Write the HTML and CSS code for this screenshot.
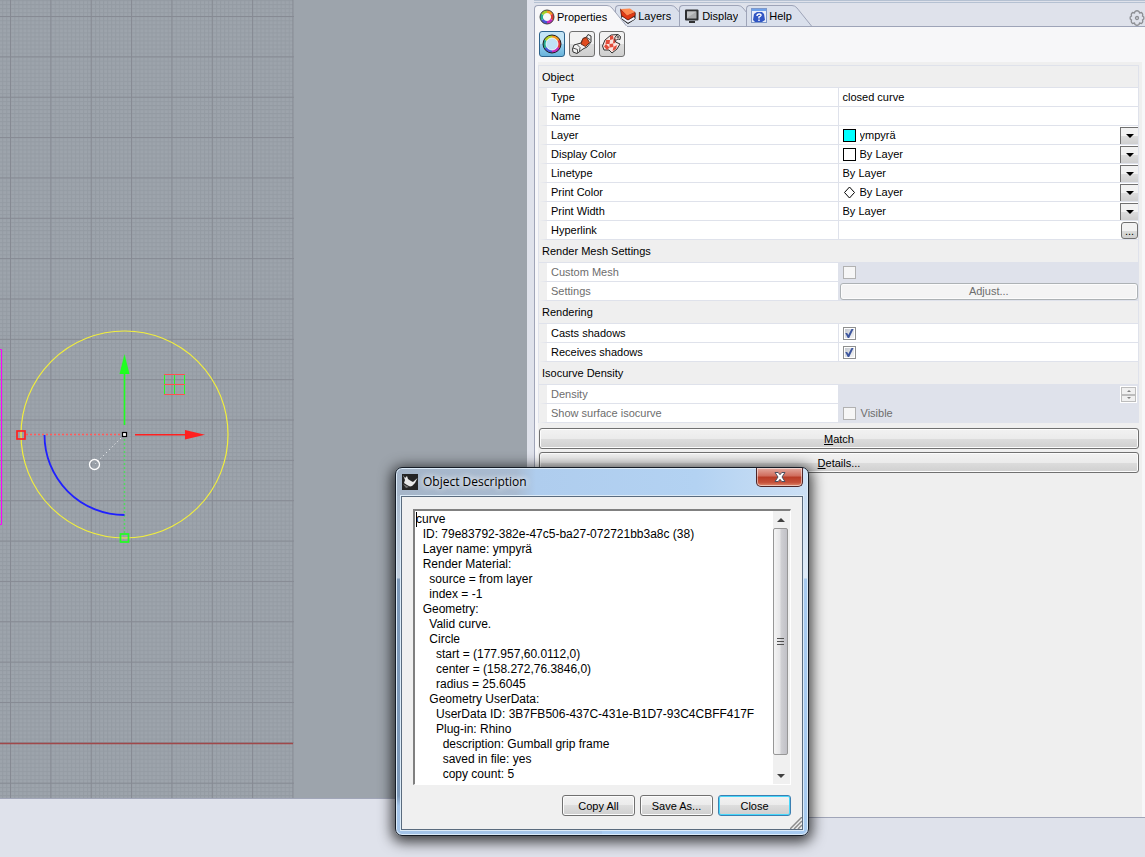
FILE: index.html
```
<!DOCTYPE html>
<html lang="en">
<head>
	<meta charset="UTF-8">
	<title>Properties</title>
	<link rel="stylesheet" href="styles.css">
</head>
<body>
<div class="app">
	<main class="viewport">
		<svg class="scene" aria-hidden="true">
			<defs>
				<pattern id="minor" x="2.25" y="0.15" width="4.035" height="4.035" patternUnits="userSpaceOnUse">
					<path d="M0 .5H4.035M.5 0V4.035" stroke="#949ba3" stroke-width="1" fill="none"/>
				</pattern>
				<pattern id="major" x="10" y="16" width="40.35" height="40.35" patternUnits="userSpaceOnUse">
					<path d="M0 .5H40.35M.5 0V40.35" stroke="#868a93" stroke-width="1" fill="none"/>
				</pattern>
			</defs>
			<rect width="293" height="100%" fill="url(#minor)"/>
			<rect width="294" height="100%" fill="url(#major)"/>
			<path d="M0 743.500H293" stroke="#a0484a" stroke-width="1.600"/>
			<path d="M0 349.500H1.500V524.500H0" stroke="#f0f" fill="none"/>
			<circle cx="124.500" cy="434.500" r="103.500" fill="none" stroke="#f2ef3c" stroke-width="1.200"/>
			<path d="M26 434.500H121" stroke="#ff5a5a" stroke-width="1.400" stroke-dasharray="2 2"/>
			<path d="M124.500 439V533" stroke="#52d860" stroke-width="1.400" stroke-dasharray="2 2"/>
			<path d="M121 438L95 464" stroke="#fff" stroke-dasharray="1 3"/>
			<path d="M44.500 435A80 80 0 0 0 124.500 515" fill="none" stroke="#2020ff" stroke-width="1.800"/>
			<circle cx="94.500" cy="464.500" r="5" fill="none" stroke="#fff" stroke-width="1.300"/>
			<path d="M124.500 425V372" stroke="#20ff20" stroke-width="1.600"/>
			<path d="M124.500 354L129.500 374H119.500Z" fill="#20ff20"/>
			<path d="M135 434.800H186" stroke="#ff2020" stroke-width="1.600"/>
			<path d="M205 434.800L185 430V439.500Z" fill="#ff2020"/>
			<rect x="17" y="431" width="8" height="8" fill="none" stroke="#ff2020" stroke-width="1.700"/>
			<rect x="120.500" y="534" width="8" height="8" fill="none" stroke="#20ff20" stroke-width="1.700"/>
			<rect x="122.500" y="432.500" width="4" height="4" fill="#fff" stroke="#000" stroke-width="1.200"/>
			<path d="M164.500 374.500V394.500M174.500 374.500V394.500M184.500 374.500V394.500" stroke="#20ff20"/>
			<path d="M164 374.500H185M164 384.500H185M164 394.500H185" stroke="#ff5050"/>
		</svg>
	</main>

	<aside class="dock">
		<div class="tabs" role="tablist">
			<button class="tab active" role="tab" aria-selected="true">
				<svg class="icon" viewBox="0 0 16 16"><g fill="none" stroke-width="3"><path d="M8 2.500A5.500 5.500 0 0 1 12.800 5.300" stroke="#f39a22"/><path d="M12.800 5.300A5.500 5.500 0 0 1 12.800 10.700" stroke="#df3b35"/><path d="M12.800 10.700A5.500 5.500 0 0 1 8 13.500" stroke="#c32cba"/><path d="M8 13.500A5.500 5.500 0 0 1 3.200 10.700" stroke="#4854d5"/><path d="M3.200 10.700A5.500 5.500 0 0 1 3.200 5.300" stroke="#28ad91"/><path d="M3.200 5.300A5.500 5.500 0 0 1 8 2.500" stroke="#a2cf28"/></g><circle cx="8" cy="8" r="7" fill="none" stroke="#444"/></svg>
				Properties
				<svg class="slant" viewBox="0 0 20 21"><path class="fill" d="M0 0Q3 0 5 3L20 21V22H0Z"/><path class="edge" d="M0 .5Q3 .5 5 3L19.500 21"/></svg>
			</button>
			<button class="tab" role="tab">
				<svg class="icon" viewBox="0 0 16 16"><path d="M1 2L7 8L15 5V11L8 15.500L2 11Z" fill="#30333a" stroke="#222"/><path d="M2 9.500L8 13.500L14.500 10" stroke="#f4f6ff" stroke-width="2" fill="none"/><path d="M.5 1L7 7L15 4V7.500L8 12L1.500 7.500Z" fill="#e03a14" stroke="#76200f" stroke-width=".7"/><path d="M1 1L10 .5L15 4L7 7.500Z" fill="#ff8a50"/></svg>
				Layers
				<svg class="slant" viewBox="0 0 20 21"><path class="fill" d="M0 0Q3 0 5 3L20 21H0Z"/><path class="edge" d="M0 .5Q3 .5 5 3L19.500 21"/></svg>
			</button>
			<button class="tab" role="tab">
				<svg class="icon" viewBox="0 0 16 16"><rect x="1" y="1.500" width="13.500" height="11" rx="1" fill="#2d2f31"/><rect x="3" y="3.500" width="9.500" height="7" fill="#a9abad"/><path d="M3 3.500H12.500L3 10Z" fill="#c1c3c5"/><path d="M5 14H11" stroke="#333" stroke-width="2"/></svg>
				Display
				<svg class="slant" viewBox="0 0 20 21"><path class="fill" d="M0 0Q3 0 5 3L20 21H0Z"/><path class="edge" d="M0 .5Q3 .5 5 3L19.500 21"/></svg>
			</button>
			<button class="tab" role="tab">
				<svg class="icon" viewBox="0 0 16 16"><rect x=".5" y=".5" width="15" height="14" fill="#e9eef9" stroke="#7f98c8"/><path d="M1 2H15" stroke="#6fa2ec" stroke-width="2"/><path d="M3 6L6 4H11L13 6L14 12L11 14H4L2 12Z" fill="#3156c4"/><path d="M6 8C6 5.500 10.500 5.500 10 7.500Q9.500 8.500 8 9V10.500M8 11.500V13" fill="none" stroke="#fff" stroke-width="1.400"/></svg>
				Help
				<svg class="slant" viewBox="0 0 20 21"><path class="fill" d="M0 0Q3 0 5 3L20 21H0Z"/><path class="edge" d="M0 .5Q3 .5 5 3L19.500 21"/></svg>
			</button>
			<button class="gear" aria-label="Options">
				<svg viewBox="0 0 16 16"><g fill="none" stroke="#8d8f94" stroke-width="1.300"><path d="M6 1.500Q8 0 10 1.500L10.500 3L12.500 2.500Q14.300 4 13.500 6L14.800 7V9L13.500 10Q14.300 12 12.500 13.500L10.500 13L10 14.500Q8 16 6 14.500L5.500 13L3.500 13.500Q1.700 12 2.500 10L1.200 9V7L2.500 6Q1.700 4 3.500 2.500L5.500 3Z"/><circle cx="8" cy="8" r="1.500"/></g></svg>
			</button>
		</div>

		<div class="toolbar">
			<button class="tool on" aria-label="Object">
				<svg viewBox="0 0 22 22"><g fill="none" stroke-width="4"><path d="M11 4A7 7 0 0 1 17.060 7.500" stroke="#f59a20"/><path d="M17.060 7.500A7 7 0 0 1 17.060 14.500" stroke="#e03838"/><path d="M17.060 14.500A7 7 0 0 1 11 18" stroke="#c22dbd"/><path d="M11 18A7 7 0 0 1 4.940 14.500" stroke="#4656d8"/><path d="M4.940 14.500A7 7 0 0 1 4.940 7.500" stroke="#26aa8e"/><path d="M4.940 7.500A7 7 0 0 1 11 4" stroke="#b1d126"/></g><circle cx="11" cy="11" r="9" fill="none" stroke="#222"/><circle cx="11" cy="11" r="6" fill="#c0e2f5" stroke="#fff" stroke-width=".8"/></svg>
			</button>
			<button class="tool" aria-label="Material">
				<svg viewBox="0 0 22 22"><path d="M1.500 16L3 12L10 10L12 5.500L15.500 4L17 1.500L20 3V9L16 14L12 16L6 20.500L2 19Z" fill="#f2f2f2" stroke="#333"/><path d="M12 5.500L15.500 4.500L18.500 9.500L14.500 13.500L10 11Z" fill="#e14c20" stroke="#6c2b18"/><path d="M2 15L6.500 16.500V20M6 11.500L9 14.500L8.500 18M16 4.500L19.500 7" fill="none" stroke="#555"/></svg>
			</button>
			<button class="tool" aria-label="Texture Mapping">
				<svg viewBox="0 0 22 22"><path d="M1.500 13L4 7L10 2L17 1.500Q21 3 19 6.500Q15 5 14.500 9L19 11L16 16L11 20L8 17L3 17Z" fill="#fae4df" stroke="#333"/><path d="M9 3L12 2.500L12.500 6L9 7ZM5 7L9 7L8.500 11L4.500 11ZM8.500 11L12 10.500L12.500 14L8.500 14.500ZM12.500 6L15 6L14 10L12 10.500ZM3 13.500L5 11L8.500 14.500L6 17ZM12.500 14L16 12L15 16L11.500 18Z" fill="#e24c3a"/><path d="M14.500 9Q12 4 17 1.500" stroke="#333" fill="none"/><path d="M16 3H18.500L18 5L15.500 5Z" fill="#777"/></svg>
			</button>
		</div>

		<div class="sheet">
			<table class="props">
				<tbody>
					<tr class="group"><th colspan="2">Object</th></tr>
					<tr><th>Type</th><td>closed curve</td></tr>
					<tr><th><label for="name">Name</label></th><td><input class="text" type="text" id="name"></td></tr>
					<tr><th><label for="layer">Layer</label></th><td><div class="combo"><i class="swatch cyan"></i><select id="layer"><option>ympyrä</option></select><span class="drop"></span></div></td></tr>
					<tr><th><label for="dcolor">Display Color</label></th><td><div class="combo"><i class="swatch"></i><select id="dcolor"><option>By Layer</option></select><span class="drop"></span></div></td></tr>
					<tr><th><label for="linetype">Linetype</label></th><td><div class="combo"><select id="linetype"><option>By Layer</option></select><span class="drop"></span></div></td></tr>
					<tr><th><label for="pcolor">Print Color</label></th><td><div class="combo"><svg class="diamond" viewBox="0 0 13 13"><path d="M6.500 1L11.500 6.500L6.500 12L1.500 6.500Z" fill="#fff" stroke="#000"/></svg><select id="pcolor"><option>By Layer</option></select><span class="drop"></span></div></td></tr>
					<tr><th><label for="pwidth">Print Width</label></th><td><div class="combo"><select id="pwidth"><option>By Layer</option></select><span class="drop"></span></div></td></tr>
					<tr><th><label for="link">Hyperlink</label></th><td><div class="combo"><input class="text" type="text" id="link"><button class="more">...</button></div></td></tr>
				</tbody>
				<tbody>
					<tr class="group"><th colspan="2">Render Mesh Settings</th></tr>
					<tr class="off"><th><label for="mesh">Custom Mesh</label></th><td><input class="check" type="checkbox" id="mesh" disabled></td></tr>
					<tr class="off"><th>Settings</th><td class="flush"><button class="btn adjust" disabled>Adjust...</button></td></tr>
				</tbody>
				<tbody>
					<tr class="group"><th colspan="2">Rendering</th></tr>
					<tr><th><label for="casts">Casts shadows</label></th><td><input class="check" type="checkbox" id="casts" checked></td></tr>
					<tr><th><label for="receives">Receives shadows</label></th><td><input class="check" type="checkbox" id="receives" checked></td></tr>
				</tbody>
				<tbody>
					<tr class="group"><th colspan="2">Isocurve Density</th></tr>
					<tr class="off"><th><label for="density">Density</label></th><td><div class="combo"><input class="text" type="text" id="density" disabled><span class="spin"><button class="up" aria-label="Increase" disabled></button><button class="down" aria-label="Decrease" disabled></button></span></div></td></tr>
					<tr class="off"><th>Show surface isocurve</th><td><div class="combo"><input class="check" type="checkbox" id="visible" disabled><label class="visible" for="visible">Visible</label></div></td></tr>
				</tbody>
			</table>
			<div class="actions">
				<button class="btn"><u>M</u>atch</button>
				<button class="btn"><u>D</u>etails...</button>
			</div>
		</div>
	</aside>
</div>

<section class="dialog" role="dialog" aria-labelledby="dlg-title">
	<header class="titlebar">
		<svg class="logo" viewBox="0 0 16 16"><rect width="16" height="16" fill="#242424"/><path d="M1 1L3 4L5 2L6 5L9 7L11 8L15.500 4L13 9L10 12L8 12.500L5 11L2 9L3 6Z" fill="#e8e8e8"/><path d="M1 10L7 13L4 14Z" fill="#777"/></svg>
		<h1 id="dlg-title">Object Description</h1>
		<button class="close" aria-label="Close window"><svg viewBox="0 0 12 10"><path d="M1 .5H4.200L6 2.700L7.800 .5H11L8 5L11 9.500H7.800L6 7.300L4.200 9.500H1L4 5Z" fill="#fff" stroke="#4b5060"/></svg></button>
	</header>
	<div class="client">
		<div class="editor">
			<textarea aria-label="Description" readonly>curve
  ID: 79e83792-382e-47c5-ba27-072721bb3a8c (38)
  Layer name: ympyrä
  Render Material:
    source = from layer
    index = -1
  Geometry:
    Valid curve.
    Circle
      start = (177.957,60.0112,0)
      center = (158.272,76.3846,0)
      radius = 25.6045
    Geometry UserData:
      UserData ID: 3B7FB506-437C-431e-B1D7-93C4CBFF417F
      Plug-in: Rhino
        description: Gumball grip frame
        saved in file: yes
        copy count: 5</textarea>
			<div class="scroll" aria-hidden="true">
				<span class="arrow up"></span>
				<span class="thumb"><i></i><i></i><i></i></span>
				<span class="arrow down"></span>
			</div>
		</div>
		<footer>
			<button class="btn">Copy All</button>
			<button class="btn">Save As...</button>
			<button class="btn default">Close</button>
		</footer>
		<svg class="grip" viewBox="0 0 12 12"><path d="M0 12L12 0M4 12L12 4M8 12L12 8" stroke="#8c8c8c" stroke-width="1.500"/></svg>
	</div>
</section>
</body>
</html>
```
FILE: styles.css
```
*{
    box-sizing: border-box;
}
body{
    margin: 0;
    background: #dfe2eb;
    color: #000;
    font: 11px/18px "Liberation Sans", Arial, sans-serif;
}
button,input,select,textarea{
    font: inherit;
    color: inherit;
    margin: 0;
    padding: 0;
}
.app{
    display: grid;
    grid-template-columns: 527fr 611fr;
    column-gap: 7px;
    min-height: 100vh;
}

/* drawing area */
.viewport{
    margin-bottom: 58px;
    background: #9da4ac;
    border-bottom: 1px solid #a0a5b8;
    overflow: hidden;
}
.scene{
    display: block;
    width: 100%;
    height: 100%;
}

/* docked panel */
.dock{
    display: flex;
    flex-direction: column;
    margin-bottom: 39px;
    background: #f7f7f9;
    border-left: 1px solid #a0a5b8;
    border-bottom: 1px solid #a0a5b8;
}
.tabs{
    display: flex;
    height: 27px;
    padding-top: 5px;
    margin-left: -1px;
    background: linear-gradient(#b5c1d2 1px, #dfe2eb 1px, #dfe2eb 2px, #b5c1d2 2px, #b5c1d2 3px, #dfe2eb 3px);
    border-bottom: 1px solid #9ea4b8;
}
.tab{
    position: relative;
    display: flex;
    align-items: center;
    gap: 2px;
    height: 21px;
    padding-left: 4px;
    border: 1px solid #9ea4b8;
    border-width: 1px 0 0 1px;
    border-radius: 4px 0 0 0;
    background: #dae0ec;
    white-space: nowrap;
}
.tab + .tab{
    margin-left: 8px;
}
.tab.active{
    z-index: 1;
    height: 22px;
    background: #f7f7f9;
}
.icon{
    width: 16px;
    height: 16px;
}
.slant{
    position: absolute;
    left: 100%;
    top: -1px;
    width: 20px;
    height: 21px;
    overflow: visible;
}
.slant .fill{
    fill: #dae0ec;
}
.active .slant .fill{
    fill: #f7f7f9;
}
.slant .edge{
    fill: none;
    stroke: #9ea4b8;
}
.gear{
    width: 16px;
    height: 16px;
    margin: 5px 0 0 auto;
    border: 0;
    background: none;
}
.gear svg{
    display: block;
}
.toolbar{
    display: flex;
    gap: 4px;
    padding: 4px 4px 5px;
}
.tool{
    width: 26px;
    height: 26px;
    padding: 1px;
    border: 1px solid #707070;
    border-radius: 3px;
    background: linear-gradient(#f2f2f2 50%, #dcdcdc 50%, #cfcfcf);
}
.tool.on{
    border-color: #2c628b;
    background: linear-gradient(#c4e5f6 50%, #98d1ef 50%, #68b3db);
}
.tool svg{
    display: block;
    width: 22px;
    height: 22px;
}

/* property sheet */
.sheet{
    flex: 1;
    margin: 0 3px;
    padding: 3px 3px 0 0;
    background: #efefef;
}
.props{
    width: 100%;
    table-layout: fixed;
    border: 1px solid #dfe2eb;
    border-bottom: 0;
    border-spacing: 0;
}
.props th,.props td{
    height: 19px;
    padding: 1px 0 0;
    border-bottom: 1px solid #dfe2eb;
    background: #fff;
    font-weight: normal;
    line-height: 17px;
    text-align: left;
    vertical-align: middle;
}
.props th{
    padding-left: 4px;
    border-left: 8px solid #efefef;
    border-right: 1px solid #dfe2eb;
}
.props td{
    padding-left: 4px;
}
.props .group th{
    height: 23px;
    padding-left: 3px;
    border-left: 0;
    border-right: 0;
    background: #efefef;
}
.props tbody:first-child .group th{
    height: 22px;
}
.props .off th{
    color: #6d6d6d;
}
.props .off td{
    background: #dfe2eb;
    color: #6d6d6d;
}
.props .flush{
    padding-left: 1px;
}
.combo{
    display: flex;
    align-items: center;
    height: 17px;
}
.swatch,.diamond{
    flex: none;
    width: 13px;
    height: 13px;
    margin-right: 4px;
}
.swatch{
    border: 1px solid #000;
    background: #fff;
}
.swatch.cyan{
    background: #0ff;
}
.combo select{
    flex: 1;
    min-width: 0;
    height: 17px;
    border: 0;
    background: none;
    appearance: none;
    color: #000;
}
.drop{
    display: flex;
    align-items: center;
    justify-content: center;
    width: 18px;
    height: 17px;
    border: 1px solid #707070;
    border-width: 1px 0 0 1px;
    background: linear-gradient(#f2f2f2 50%, #dddddd 50%, #cfcfcf);
}
.drop::after{
    content: "";
    border: 4px solid transparent;
    border-top-color: #000;
    border-bottom: 0;
}
.text{
    display: block;
    flex: 1;
    width: 100%;
    min-width: 0;
    height: 17px;
    border: 0;
    background: none;
}
.more{
    width: 17px;
    height: 17px;
    border: 1px solid #707070;
    border-radius: 3px;
    background: linear-gradient(#f2f2f2 50%, #dddddd 50%, #cfcfcf);
}
.check{
    display: block;
    width: 13px;
    height: 13px;
    padding: 1px;
    border: 1px solid #8e8f8f;
    background: linear-gradient(135deg, #c5c9d0, #f6f6f6) content-box #f4f4f4;
    appearance: none;
}
.check:checked::after{
    content: "";
    display: block;
    width: 9px;
    height: 9px;
    background: #3d569e;
    clip-path: polygon(8% 45%, 30% 45%, 42% 66%, 78% 0, 100% 0, 52% 100%, 36% 100%);
}
.check:disabled{
    border-color: #b1b1b1;
    background: #f6f6f6;
}
.visible{
    margin-left: 5px;
}
.spin{
    display: flex;
    flex-direction: column;
    width: 17px;
    height: 17px;
    margin-right: 1px;
    padding: 1px;
    background: #fff;
}
.spin button{
    display: flex;
    align-items: center;
    justify-content: center;
    flex: 1;
    border: 1px solid #bdbdbd;
    background: #f0f0f0;
}
.spin button::after{
    content: "";
    border: 2px solid transparent;
}
.spin .up::after{
    border-bottom-color: #808080;
    border-top: 0;
}
.spin .down::after{
    border-top-color: #808080;
    border-bottom: 0;
}
.btn{
    display: block;
    height: 21px;
    border: 1px solid #707070;
    border-radius: 3px;
    background: linear-gradient(#f2f2f2, #ebebeb 50%, #dddddd 50%, #cfcfcf);
    box-shadow: inset 0 0 0 1px #fcfcfc;
    text-align: center;
}
.btn.adjust{
    width: 100%;
    height: 17px;
    border-color: #adb2b5;
    background: #f4f4f4;
    line-height: 15px;
}
.actions{
    display: flex;
    flex-direction: column;
    gap: 3px;
    padding: 5px 0 0 1px;
}

/* floating window */
.dialog{
    position: absolute;
    left: 395px;
    top: 467px;
    width: 414px;
    padding: 0 5px 5px;
    border: 1px solid #151c26;
    border-radius: 7px;
    background:
        linear-gradient(90deg, #a5b5c8, #a9bbd1 120px, #afcdee 140px, #b3d2f2 300px, #cce0f5) 0 0 / 100% 28px no-repeat,
        linear-gradient(#a8b9cc, #c3d0df 82px, #7c98b8 83px, #7c98b8 300px, #a4c4e8 310px) 0 28px / 50% 100% no-repeat,
        linear-gradient(#c9def4, #e0ebf7 82px, #a8cbf0 83px) 100% 28px / 50% 100% no-repeat;
    box-shadow: inset 0 0 0 1px #dcebf8, 0 3px 14px 3px rgba(0, 0, 0, .75);
}
.titlebar{
    display: flex;
    align-items: center;
    gap: 5px;
    height: 28px;
    padding-left: 1px;
}
.logo{
    width: 16px;
    height: 16px;
}
.titlebar h1{
    margin: 0;
    font: 12px/18px "Open Sans", "Noto Sans", sans-serif;
    text-shadow: 0 0 6px #fff, 0 0 6px #fff;
}
.close{
    display: flex;
    align-items: center;
    justify-content: center;
    align-self: flex-start;
    width: 47px;
    height: 19px;
    margin-left: auto;
    border: 1px solid #4c2528;
    border-top: 0;
    border-radius: 0 0 5px 5px;
    background: linear-gradient(#e4aaa0, #cf6b5b 45%, #b83b26 50%, #c5513a 80%, #e08c70);
    box-shadow: inset 0 0 0 1px rgba(255, 255, 255, .5);
}
.close svg{
    width: 12px;
    height: 10px;
}
.client{
    position: relative;
    padding: 12px 11px 13px;
    border: 1px solid #5a6b7e;
    background: #f0f0f0;
    box-shadow: 0 0 0 1px #dcebf8;
}
.editor{
    position: relative;
    display: flex;
    height: 276px;
    border: 1px solid #fff;
    border-top: 2px solid #808080;
    border-left: 2px solid #808080;
    background: #fff;
}
.editor::before{
    content: "";
    position: absolute;
    left: 1px;
    top: 1px;
    width: 1px;
    height: 15px;
    background: #000;
}
.editor textarea{
    flex: 1;
    min-width: 0;
    padding: 1px 1px 0;
    border: 0;
    background: none;
    outline: 0;
    overflow: hidden;
    resize: none;
    font-size: 12px;
    line-height: 15px;
    white-space: pre;
}
.scroll{
    display: flex;
    flex-direction: column;
    width: 17px;
    padding-right: 2px;
    background: #f0f0f0;
}
.arrow{
    display: flex;
    align-items: center;
    justify-content: center;
    height: 17px;
}
.arrow::after{
    content: "";
    border: 4px solid transparent;
}
.arrow.up::after{
    border-top: 0;
    border-bottom-color: #404040;
}
.arrow.down::after{
    border-bottom: 0;
    border-top-color: #404040;
}
.thumb{
    display: flex;
    flex: 1;
    flex-direction: column;
    align-items: center;
    justify-content: center;
    gap: 2px;
    margin-bottom: 12px;
    border: 1px solid #979797;
    border-radius: 2px;
    background: linear-gradient(90deg, #f4f4f4, #e6e6e8 45%, #cfcfd3 55%, #c0c0c6);
}
.thumb i{
    width: 7px;
    height: 1px;
    background: #505050;
}
.client footer{
    display: flex;
    justify-content: flex-end;
    gap: 5px;
    padding-top: 10px;
}
.client footer .btn{
    width: 73px;
}
.btn.default{
    border-color: #3c7fb1;
    box-shadow: inset 0 0 0 1px #48d8fb;
}
.grip{
    position: absolute;
    right: 0;
    bottom: 0;
    width: 12px;
    height: 12px;
}
```
